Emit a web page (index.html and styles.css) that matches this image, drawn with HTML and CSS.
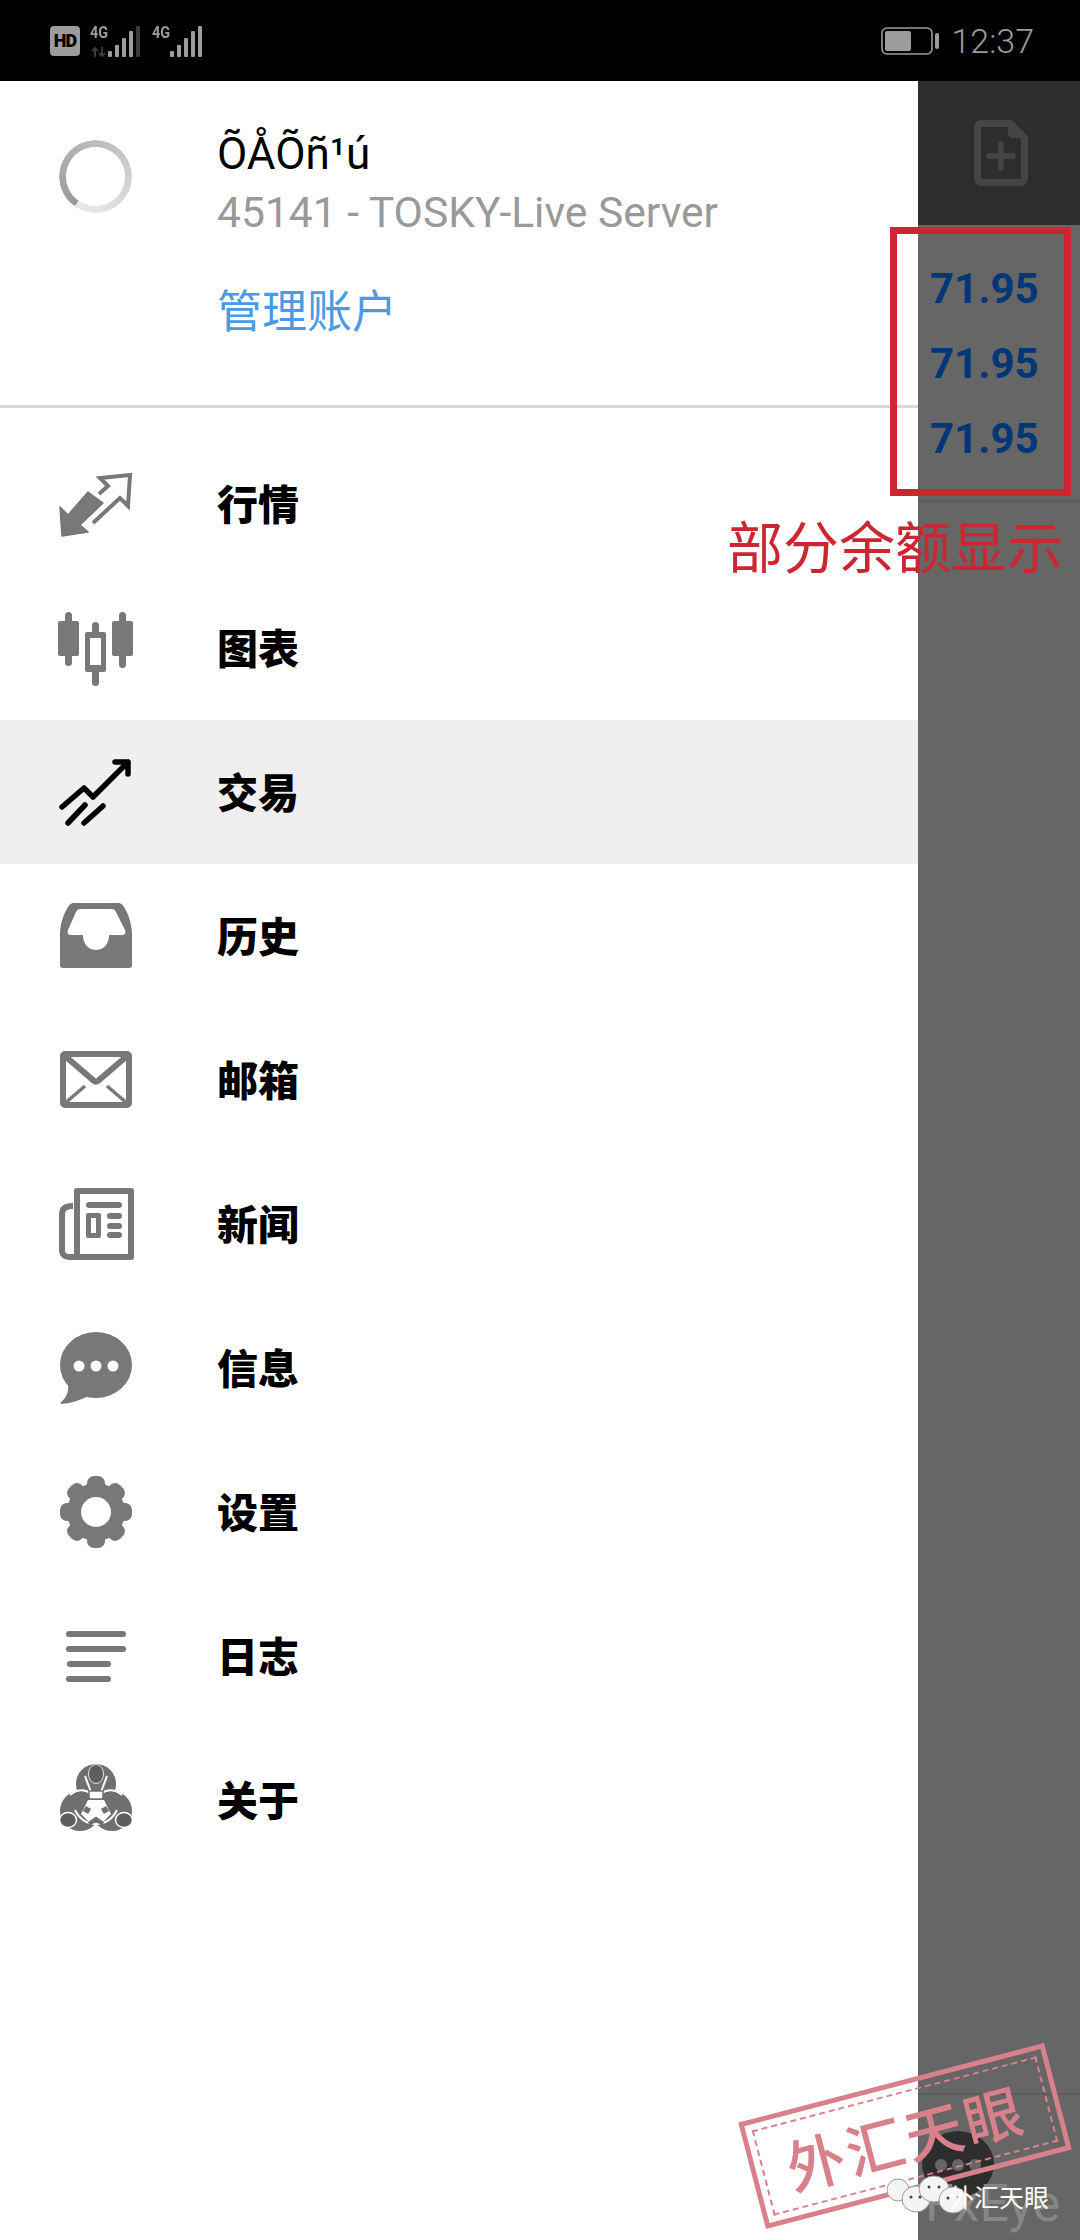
FILE: index.html
```html
<!DOCTYPE html>
<html lang="en">
<head>
  <meta charset="UTF-8">
  <meta name="viewport" content="width=device-width, initial-scale=1.0">
  <title>MetaTrader menu</title>
  <link rel="stylesheet" href="styles.css">
</head>
<body>
<div class="screen">

  <div class="statusBar">
    <div class="statusLeft">
      <span class="hdBadge">HD</span>
      <div class="signal">
        <span class="netText">4G</span>
        <svg class="signalArrows" width="16" height="10" viewBox="0 0 16 10"><path d="M4 10V1M1 4l3-3 3 3M11 0v9M8 6l3 3 3-3" fill="none" stroke="#3a3a3a" stroke-width="2"/></svg>
        <svg class="signalBars" width="36" height="32" viewBox="0 0 36 32" fill="#9c9c9c"><rect x="1" y="26" width="4" height="6" rx="1"/><rect x="8" y="20" width="4" height="12" rx="1"/><rect x="15" y="13" width="4" height="19" rx="1"/><rect x="22" y="6" width="4" height="26" rx="1"/><rect x="29" y="1" width="4" height="31" rx="1" fill="#3a3a3a"/></svg>
      </div>
      <div class="signal signalSecond">
        <span class="netText">4G</span>
        <svg class="signalBars" width="36" height="32" viewBox="0 0 36 32" fill="#9c9c9c"><rect x="1" y="26" width="4" height="6" rx="1"/><rect x="8" y="20" width="4" height="12" rx="1"/><rect x="15" y="13" width="4" height="19" rx="1"/><rect x="22" y="6" width="4" height="26" rx="1"/><rect x="29" y="1" width="4" height="31" rx="1"/></svg>
      </div>
    </div>
    <div class="statusRight">
      <svg width="58" height="28" viewBox="0 0 58 28"><rect x="1" y="1" width="50" height="26" rx="5" fill="none" stroke="#9c9c9c" stroke-width="1.6"/><rect x="4" y="4" width="26" height="20" rx="2" fill="#9c9c9c"/><rect x="54" y="6" width="4" height="16" rx="2" fill="#9c9c9c"/></svg>
      <span class="clock">12:37</span>
    </div>
  </div>

  <div class="main">
    <div class="drawer">
      <div class="account">
        <div class="spinner"></div>
        <div class="accountInfo">
          <div class="accountName">ÕÅÕñ¹ú</div>
          <div class="accountServer">45141 - TOSKY-Live Server</div>
          <div class="manageLink">管理账户</div>
        </div>
      </div>

      <div class="menu">
        <div class="menuItem">
          <svg class="menuIcon" viewBox="0 0 72 72"><path d="M0 39l8 8 20-23 15 11-23 22 8 7-26 4z" fill="#787878" stroke="#787878" stroke-width="1.5" stroke-linejoin="round"/><path d="M33 55L60 30l8 8 2-31-30 3 8 8-9 8" fill="none" stroke="#787878" stroke-width="4"/></svg>
          <span class="menuLabel">行情</span>
        </div>
        <div class="menuItem">
          <svg class="menuIcon" viewBox="0 0 72 72" fill="#787878"><rect x="-2" y="9" width="21" height="35" rx="2"/><rect x="5" y="0" width="7" height="54" rx="3.5"/><rect x="32" y="10" width="7" height="64" rx="3.5"/><rect x="25" y="20" width="21" height="40" rx="2"/><rect x="30" y="26" width="11" height="27" fill="#fff"/><rect x="52" y="9" width="21" height="35" rx="2"/><rect x="59" y="0" width="7" height="56" rx="3.5"/></svg>
          <span class="menuLabel">图表</span>
        </div>
        <div class="menuItem menuItemActive">
          <svg class="menuIcon" viewBox="0 0 72 72" fill="none" stroke="#000" stroke-width="5.5" stroke-linecap="round" stroke-linejoin="round"><path d="M2 51L24 32l9 9L68 6M55 6h13v12M8 67l17-18M24 67l19-17"/></svg>
          <span class="menuLabel">交易</span>
        </div>
        <div class="menuItem">
          <svg class="menuIcon" viewBox="0 0 72 72"><path fill-rule="evenodd" fill="#787878" d="M14 3h44c3 0 5 2 6 4 5 8 8 18 8 28v30c0 2-1 3-3 3H3c-2 0-3-1-3-3V35C0 25 3 15 8 7c1-2 3-4 6-4zM21 9c-3 0-4 1-5 3L8 30c-1 3 0 5 3 5h12v1a13 14 0 0 0 26 0v-1h13c3 0 4-2 3-5L56 12c-1-2-2-3-5-3z"/></svg>
          <span class="menuLabel">历史</span>
        </div>
        <div class="menuItem">
          <svg class="menuIcon" viewBox="0 0 72 72" fill="none" stroke="#787878"><rect x="3" y="10" width="66" height="51" rx="2" stroke-width="6"/><path d="M5 12l29 25c1 1 3 1 4 0l29-25" stroke-width="6"/><path d="M4 60l21-18M68 60L47 42" stroke-width="3.5"/></svg>
          <span class="menuLabel">邮箱</span>
        </div>
        <div class="menuItem">
          <svg class="menuIcon" viewBox="0 0 72 72" fill="#787878"><path d="M17 3h54v66H17z" fill="none" stroke="#787878" stroke-width="6" stroke-linejoin="round"/><path d="M13 18c-8 0-11 3-11 8v36c0 5 3 7 7 7h9" fill="none" stroke="#787878" stroke-width="6"/><rect x="26" y="14" width="36" height="6" rx="3"/><path fill-rule="evenodd" d="M28 25h11a2 2 0 0 1 2 2v21a2 2 0 0 1-2 2H28a2 2 0 0 1-2-2V27a2 2 0 0 1 2-2zm3 5v15h5V30z"/><rect x="47" y="25" width="15" height="6" rx="3"/><rect x="47" y="35" width="15" height="6" rx="3"/><rect x="47" y="44" width="15" height="6" rx="3"/></svg>
          <span class="menuLabel">新闻</span>
        </div>
        <div class="menuItem">
          <svg class="menuIcon" viewBox="0 0 72 72"><ellipse cx="36" cy="33" rx="36" ry="33" fill="#787878"/><path d="M8 52c1 8-2 14-7 18-1 1 0 2 1 2 10-1 18-4 27-8z" fill="#787878"/><circle cx="19" cy="34" r="5.5" fill="#fff"/><circle cx="36" cy="34" r="5.5" fill="#fff"/><circle cx="53" cy="34" r="5.5" fill="#fff"/></svg>
          <span class="menuLabel">信息</span>
        </div>
        <div class="menuItem">
          <svg class="menuIcon" viewBox="0 0 72 72" fill="#787878"><circle cx="36" cy="36" r="29"/><rect x="27" y="0" width="18" height="72" rx="7"/><rect x="27" y="0" width="18" height="72" rx="7" transform="rotate(45 36 36)"/><rect x="27" y="0" width="18" height="72" rx="7" transform="rotate(90 36 36)"/><rect x="27" y="0" width="18" height="72" rx="7" transform="rotate(135 36 36)"/><circle cx="36" cy="36" r="15" fill="#fff"/></svg>
          <span class="menuLabel">设置</span>
        </div>
        <div class="menuItem">
          <svg class="menuIcon" viewBox="0 0 72 72" fill="#787878"><rect x="6" y="11" width="60" height="6" rx="3"/><rect x="6" y="26" width="60" height="6" rx="3"/><rect x="7" y="41" width="44" height="6" rx="3"/><rect x="6" y="56" width="45" height="6" rx="3"/></svg>
          <span class="menuLabel">日志</span>
        </div>
        <div class="menuItem">
          <svg class="menuIcon" viewBox="0 0 72 72">
            <g fill="#6f6f6f"><circle cx="36" cy="20" r="20"/><circle cx="20" cy="47" r="20"/><circle cx="52" cy="47" r="20"/></g>
            <path d="M28 36h16l7 14-8 8H29l-8-8z" fill="#fff"/>
            <g fill="none" stroke="#fff" stroke-width="2"><path d="M10 31c7-6 15-6 20-2M62 31c-7-6-15-6-20-2M25 12l6 16M47 12l-6 16M15 46c5 10 12 14 21 14s16-4 21-14"/></g>
            <rect x="29" y="27" width="14" height="8" fill="#fff" stroke="#6f6f6f" stroke-width="1.5"/>
            <rect x="24" y="43" width="6" height="6" fill="#6f6f6f" transform="rotate(30 27 46)"/>
            <rect x="42" y="43" width="6" height="6" fill="#6f6f6f" transform="rotate(-30 45 46)"/>
            <path d="M29 60l7-5 7 5" fill="none" stroke="#6f6f6f" stroke-width="4"/>
            <ellipse cx="36" cy="10" rx="7.5" ry="9.500" fill="#5e5e5e" stroke="#fff" stroke-width="0.8"/>
            <ellipse cx="8" cy="56" rx="8.500" ry="7.500" fill="#5e5e5e" stroke="#fff" stroke-width="1.5"/>
            <ellipse cx="64" cy="56" rx="8.500" ry="7.500" fill="#5e5e5e" stroke="#fff" stroke-width="1.5"/>
          </svg>
          <span class="menuLabel">关于</span>
        </div>
      </div>
    </div>

    <div class="scrim">
      <div class="scrimBar">
        <svg width="54" height="66" viewBox="0 0 54 66"><path d="M7 3.5h29L50.500 18v40c0 2.500-2 4.500-4.500 4.500H7c-2 0-3.500-2-3.500-4.500V7C3.500 5 5 3.500 7 3.500z" fill="none" stroke="#454545" stroke-width="7" stroke-linejoin="round"/><path d="M34 3l17 15H38c-2 0-4-2-4-4z" fill="#454545"/><path d="M15 36h24M27 24v24" stroke="#454545" stroke-width="5.500" stroke-linecap="round"/></svg>
      </div>
      <div class="balances">
        <div class="balance">71.95</div>
        <div class="balance">71.95</div>
        <div class="balance">71.95</div>
      </div>
      <div class="scrimBody"></div>
      <div class="scrimFooter">
        <svg width="72" height="72" viewBox="0 0 72 72"><ellipse cx="36" cy="33" rx="36" ry="33" fill="#2d2d2d"/><path d="M8 52c1 8-2 14-7 18-1 1 0 2 1 2 10-1 18-4 27-8z" fill="#2d2d2d"/><circle cx="19" cy="34" r="6" fill="#666"/><circle cx="36" cy="34" r="6" fill="#666"/><circle cx="53" cy="34" r="6" fill="#666"/></svg>
      </div>
    </div>
  </div>

  <!-- annotation and watermarks pasted over the screenshot -->
  <div class="redBox"></div>
  <div class="redNote">部分余额显示</div>

  <div class="fxEye">FxEye</div>
  <div class="stamp">
    <div class="stampInner"></div>
    <span class="stampText">外汇天眼</span>
  </div>
  <div class="wechatMark">
    <svg width="84" height="46" viewBox="0 0 84 46"><g fill="#f4f4f4" stroke="#9a9a9a" stroke-width="1"><ellipse cx="11" cy="17" rx="11" ry="11"/><ellipse cx="29" cy="26" rx="14" ry="13"/><ellipse cx="47" cy="16" rx="15" ry="13"/><ellipse cx="66" cy="27" rx="14" ry="13"/></g><g fill="#444"><circle cx="24" cy="24" r="1.500"/><circle cx="33" cy="24" r="1.500"/><circle cx="42" cy="14" r="1.500"/><circle cx="52" cy="14" r="1.500"/><circle cx="61" cy="25" r="1.500"/><circle cx="70" cy="25" r="1.500"/></g></svg>
    <span class="wechatName">外汇天眼</span>
  </div>

</div>
</body>
</html>
```

FILE: styles.css
```css
body {
  margin: 0;
  font-family: Roboto, "Noto Sans CJK SC", sans-serif;
  background-color: #fff;
}

.screen {
  position: relative;
  width: 1080px;
  height: 2240px;
  overflow: hidden;
  display: flex;
  flex-direction: column;
}

/* status bar */
.statusBar {
  height: 81px;
  flex: none;
  background-color: #000;
  display: flex;
  justify-content: space-between;
  align-items: center;
  padding: 0 46px 0 50px;
  color: #9c9c9c;
}

.statusLeft {
  display: flex;
  align-items: center;
  height: 32px;
}

.hdBadge {
  width: 30px;
  height: 30px;
  border-radius: 4px;
  background-color: #9c9c9c;
  color: #000;
  font-size: 18px;
  font-weight: 900;
  line-height: 30px;
  text-align: center;
  letter-spacing: -1px;
}

.signal {
  position: relative;
  width: 52px;
  height: 32px;
  margin-left: 10px;
}

.signalSecond {
  margin-left: 10px;
}

.netText {
  position: absolute;
  left: 0;
  top: -2px;
  font-size: 17px;
  font-weight: 700;
  line-height: 18px;
  transform: scaleX(0.85);
  transform-origin: left;
}

.signalArrows {
  position: absolute;
  left: 1px;
  bottom: 0;
}

.signalBars {
  position: absolute;
  left: 17px;
  bottom: 0;
}

.statusRight {
  display: flex;
  align-items: center;
  gap: 12px;
}

.clock {
  font-size: 34px;
  font-weight: 300;
  line-height: 40px;
}

/* drawer */
.main {
  flex: 1;
  display: flex;
}

.drawer {
  width: 918px;
  flex: none;
  display: flex;
  flex-direction: column;
  background-color: #fff;
}

.account {
  height: 324px;
  border-bottom: 3px solid #d8d8d8;
  display: flex;
  padding: 0 0 0 59px;
  box-sizing: content-box;
}

.spinner {
  width: 73px;
  height: 73px;
  margin-top: 59px;
  flex: none;
  border-radius: 50%;
  background: conic-gradient(from 215deg, #9a9a9a, #c4c4c4 50%, #e4e4e4 90%, #e8e8e8);
  -webkit-mask: radial-gradient(circle, transparent 29px, #000 30px);
  mask: radial-gradient(circle, transparent 29px, #000 30px);
}

.accountInfo {
  margin-left: 85px;
  padding-top: 44px;
}

.accountName {
  font-size: 44px;
  line-height: 58px;
  color: #000;
}

.accountServer {
  font-size: 42.6px;
  line-height: 58px;
  color: #999;
}

.manageLink {
  margin-top: 42px;
  font-size: 45px;
  line-height: 60px;
  color: #4a9be6;
}

.menu {
  padding-top: 24px;
  display: flex;
  flex-direction: column;
}

.menuItem {
  height: 144px;
  display: flex;
  align-items: center;
  padding-left: 60px;
}

.menuItemActive {
  background-color: #efefef;
}

.menuIcon {
  width: 72px;
  height: 72px;
  flex: none;
  overflow: visible;
}

.menuLabel {
  margin-left: 85px;
  margin-top: -5px;
  font-family: "Noto Sans CJK SC", sans-serif;
  font-size: 41px;
  font-weight: 900;
  color: #000;
}

/* dimmed page behind the drawer */
.scrim {
  flex: 1;
  display: flex;
  flex-direction: column;
  background-color: #666;
}

.scrimBar {
  height: 144px;
  flex: none;
  background-color: #2d2d2d;
  display: flex;
  justify-content: center;
  padding-top: 39px;
  padding-left: 3px;
  box-sizing: border-box;
}

.balances {
  height: 277px;
  flex: none;
  box-sizing: border-box;
  padding: 26px 0 0 12px;
  border-bottom: 3px solid #5c5c5c;
}

.balance {
  height: 75px;
  font-size: 42px;
  font-weight: 700;
  line-height: 75px;
  color: #003778;
}

.scrimBody {
  flex: 1;
}

.scrimFooter {
  height: 147px;
  flex: none;
  box-sizing: border-box;
  border-top: 2px solid #5c5c5c;
  padding: 36px 0 0 4px;
}

/* annotation over the screenshot */
.redBox {
  position: absolute;
  left: 890px;
  top: 227px;
  width: 181px;
  height: 269px;
  box-sizing: border-box;
  border: 7px solid #cc2631;
}

.redNote {
  position: absolute;
  left: 727px;
  top: 504px;
  font-family: "Noto Sans CJK SC", sans-serif;
  font-size: 56px;
  font-weight: 400;
  line-height: 80px;
  color: #cc2631;
  white-space: nowrap;
}

/* stamp watermark */
.stamp {
  position: absolute;
  left: 747px;
  top: 2081px;
  width: 316px;
  height: 110px;
  box-sizing: border-box;
  border: 5px solid #d9808a;
  transform: rotate(-14.6deg);
  display: flex;
  align-items: center;
  justify-content: center;
}

.stampInner {
  position: absolute;
  inset: 6px;
  border: 2px dashed #d9808a;
}

.stampText {
  font-family: "Noto Sans CJK SC", sans-serif;
  font-size: 58px;
  font-weight: 500;
  letter-spacing: 3px;
  line-height: 70px;
  color: #d9808a;
  white-space: nowrap;
}

.fxEye {
  position: absolute;
  left: 925px;
  top: 2174px;
  font-size: 52px;
  line-height: 60px;
  color: #868686;
}

.wechatMark {
  position: absolute;
  left: 887px;
  top: 2173px;
  display: flex;
  align-items: center;
}

.wechatName {
  margin-left: -22px;
  font-family: "Noto Sans CJK SC", sans-serif;
  font-size: 25px;
  line-height: 40px;
  color: #fff;
  white-space: nowrap;
}
```
